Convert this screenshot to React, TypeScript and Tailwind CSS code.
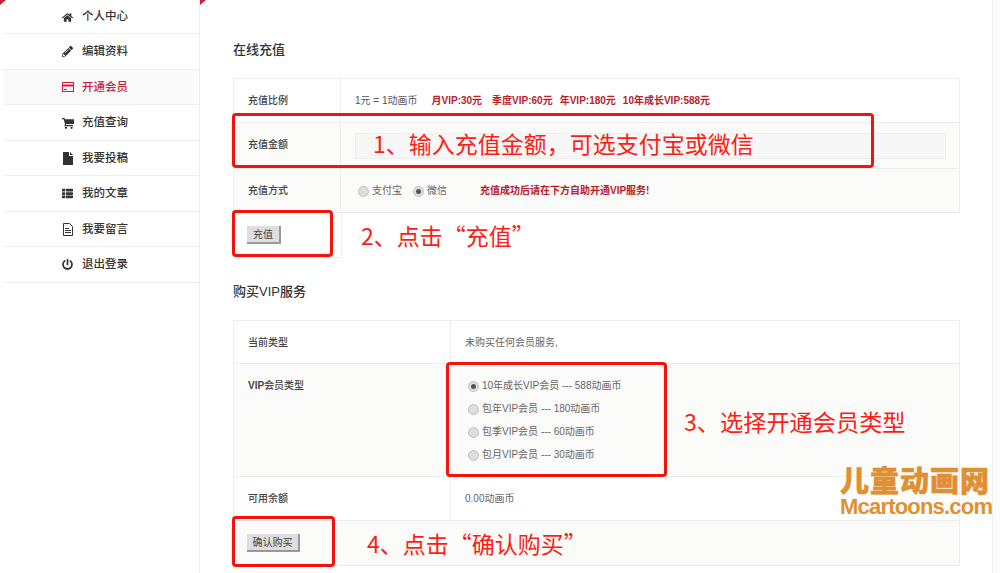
import type { ReactNode } from "react";
import { FaHome, FaPencilAlt, FaPowerOff, FaThList } from "react-icons/fa";

const cjk = "font-['Liberation_Sans','Noto_Sans_CJK_SC',sans-serif]";

const CardIcon = () => (
  <svg width="12" height="12" viewBox="0 0 12 12" fill="none" stroke="currentColor">
    <rect x="0.5" y="1.5" width="11" height="9" />
    <path d="M1 4.5h10" strokeWidth="2" />
    <path d="M2 8.5h3" />
  </svg>
);

const CartIcon = () => (
  <svg width="12" height="12" viewBox="0 0 12 12" fill="currentColor">
    <path d="M0 1h2.6l.4 1.2H12V7H4.2l-.2 1H11v1.2H2.4L3 7 1.7 2.2H0z" />
    <circle cx="4" cy="10.8" r="1.1" />
    <circle cx="9.6" cy="10.8" r="1.1" />
  </svg>
);

const FileIcon = () => (
  <svg width="12" height="13" viewBox="0 0 12 13" fill="currentColor">
    <path d="M1 0h6v4h4v9H1z" />
    <path d="M8 0l3 3H8z" />
  </svg>
);

const DocIcon = () => (
  <svg width="12" height="13" viewBox="0 0 12 13" fill="none" stroke="currentColor">
    <path d="M1.5 .5h6l3 3v9h-9z" />
    <path d="M3 5.5h4M3 7.5h6M3 9.5h6" />
  </svg>
);

const menu = [
  { label: "个人中心", icon: <FaHome /> },
  { label: "编辑资料", icon: <FaPencilAlt /> },
  { label: "开通会员", icon: <CardIcon />, active: true },
  { label: "充值查询", icon: <CartIcon /> },
  { label: "我要投稿", icon: <FileIcon /> },
  { label: "我的文章", icon: <FaThList /> },
  { label: "我要留言", icon: <DocIcon /> },
  { label: "退出登录", icon: <FaPowerOff /> },
];

const Radio = ({ checked }: { checked?: boolean }) => (
  <span className="mt-[1px] flex h-[11px] w-[11px] shrink-0 items-center justify-center rounded-full border border-[#c2c2c2] bg-[#dedede]">
    {checked && <span className="h-[5px] w-[5px] rounded-full bg-[#555]" />}
  </span>
);

const Row = ({
  label,
  width,
  height,
  children,
  shaded,
  top,
}: {
  label: ReactNode;
  width: string;
  height: string;
  children?: ReactNode;
  shaded?: boolean;
  top?: boolean;
}) => (
  <div className={`flex border-b border-[#eeeeee] ${height} ${shaded ? "bg-[#fbfbfa]" : "bg-white"}`}>
    <div
      className={`flex shrink-0 border-r border-[#eeeeee] pl-[14px] text-[10px] font-medium text-[#444] ${width} ${
        top ? "items-start pt-[14px]" : "items-center"
      }`}
    >
      {label}
    </div>
    <div className="flex min-w-0 flex-1 items-center pl-[14px] text-[10px] text-[#666]">{children}</div>
  </div>
);

const Note = ({ className, children }: { className: string; children: ReactNode }) => (
  <div className={`absolute font-['Noto_Sans_CJK_SC',sans-serif] leading-none whitespace-nowrap text-[#ff1c14] ${className}`}>
    {children}
  </div>
);

const Frame = ({ className }: { className: string }) => (
  <div className={`absolute rounded-[4px] border-[3px] border-[#f5120c] ${className}`} />
);

function MenuRow({ label, icon, active }: { label: string; icon: ReactNode; active?: boolean }) {
  return (
    <div
      className={`flex h-full items-center pt-[1px] pl-[59px] text-[11.5px] font-medium ${
        active ? "bg-[#fafafa] text-[#c8203a]" : "text-[#333]"
      }`}
    >
      <span className="flex w-[20px] justify-start text-[11px]">{icon}</span>
      {label}
    </div>
  );
}

export default function App() {
  return (
    <div className={`relative flex h-[573px] w-[1000px] overflow-hidden bg-white ${cjk}`}>
      {/* sidebar */}
      <aside className="ml-[3px] w-[197px] shrink-0 border-r border-[#eeeeee]">
        <div className="h-[34px] border-b border-[#eeeeee]">
          <MenuRow {...menu[0]} />
        </div>
        {menu.slice(1).map((item) => (
          <div key={item.label} className="h-[35.5px] border-b border-[#eeeeee]">
            <MenuRow {...item} />
          </div>
        ))}
      </aside>

      {/* main */}
      <main className="flex-1 pt-[40px] pl-[33px]">
        <h2 className="h-[19px] text-[13px] leading-[19px] font-medium text-[#333]">在线充值</h2>
        <div className="mt-[19px] w-[727px] border-t border-l border-[#eeeeee]">
          <div className="border-r border-[#eeeeee]">
            <Row label="充值比例" width="w-[107px]" height="h-[44px]">
              <span className="text-[#555]">1元 = 1动画币</span>
              <span className="ml-[14px] font-bold text-[#b8202c]">月VIP:30元</span>
              <span className="ml-[10px] font-bold text-[#b8202c]">季度VIP:60元</span>
              <span className="ml-[7px] font-bold text-[#b8202c]">年VIP:180元</span>
              <span className="ml-[7px] font-bold text-[#b8202c]">10年成长VIP:588元</span>
            </Row>
            <Row label={<span className="-mt-[3px]">充值金额</span>} width="w-[107px]" height="h-[46px]" shaded>
              <div className="h-[26px] w-[591px] border border-[#eeeeee] bg-[#f7f7f7]" />
            </Row>
            <Row label="充值方式" width="w-[107px]" height="h-[44px]" shaded>
              <span className="ml-[3px]"><Radio /></span>
              <span className="ml-[3px]">支付宝</span>
              <span className="ml-[11px]"><Radio checked /></span>
              <span className="ml-[3px]">微信</span>
              <span className="ml-[33px] font-bold text-[#b8202c]">充值成功后请在下方自助开通VIP服务!</span>
            </Row>
          </div>
          <div className="flex h-[45px] w-[108px] items-center border-r border-b border-[#eeeeee] pl-[13px]">
            <button className="h-[18px] w-[34px] border-r-2 border-b-2 border-[#999] bg-[#dedede] text-[10px] text-[#444]">
              充值
            </button>
          </div>
        </div>

        <h2 className="mt-[24px] h-[19px] text-[13px] leading-[19px] font-medium text-[#333]">购买VIP服务</h2>
        <div className="mt-[19px] w-[727px] border-t border-r border-l border-[#eeeeee]">
          <Row label="当前类型" width="w-[217px]" height="h-[43px]">
            未购买任何会员服务,
          </Row>
          <Row
            label={
              <span>
                <span className="font-bold">VIP</span>会员类型
              </span>
            }
            width="w-[217px]"
            height="h-[113px]"
            shaded
            top
          >
            <div className="ml-[3px] flex flex-col gap-[9px]">
              {[
                { text: "10年成长VIP会员 --- 588动画币", checked: true },
                { text: "包年VIP会员 --- 180动画币" },
                { text: "包季VIP会员 --- 60动画币" },
                { text: "包月VIP会员 --- 30动画币" },
              ].map((o) => (
                <div key={o.text} className="flex h-[14px] items-center gap-[3px]">
                  <Radio checked={o.checked} />
                  <span>{o.text}</span>
                </div>
              ))}
            </div>
          </Row>
          <Row label="可用余额" width="w-[217px]" height="h-[44px]">
            0.00动画币
          </Row>
          <div className="flex h-[45px] items-center border-b border-[#eeeeee] bg-[#fbfbfa] pl-[13px]">
            <button className="h-[18px] w-[53px] border-r-2 border-b-2 border-[#999] bg-[#dedede] text-[10px] text-[#444]">
              确认购买
            </button>
          </div>
        </div>
      </main>

      {/* page edge */}
      <div className="w-[8px] shrink-0 border-l border-[#f2f2f2] bg-[#fbfbfb]" />

      {/* corner marks */}
      <div className="absolute top-0 left-0 h-0 w-0 border-t-[5px] border-r-[6px] border-t-[#c8203a] border-r-transparent" />
      <div className="absolute top-0 left-[200px] h-0 w-0 border-t-[5px] border-r-[6px] border-t-[#c8203a] border-r-transparent" />

      {/* annotations */}
      <Frame className="top-[113px] left-[232px] h-[55px] w-[642px]" />
      <Note className="top-[132px] left-[373px] text-[23px]">{"1、输入充值金额\uFF0C可选支付宝或微信"}</Note>
      <Frame className="top-[210px] left-[232px] h-[47px] w-[101px]" />
      <Note className="top-[224px] left-[361px] text-[23px]">2、点击“充值”</Note>
      <Frame className="top-[362px] left-[446px] h-[115px] w-[221px]" />
      <Note className="top-[410px] left-[684px] text-[23.2px]">3、选择开通会员类型</Note>
      <Frame className="top-[516px] left-[232px] h-[51px] w-[103px]" />
      <Note className="top-[532px] left-[367px] text-[23px]">4、点击“确认购买”</Note>

      {/* watermark */}
      <div className="absolute top-[469px] left-[840px] text-[29px] leading-[27px] font-black tracking-[1px] whitespace-nowrap text-[#e09033] [-webkit-text-stroke:0.6px_#e09033]">
        儿童动画网
      </div>
      <div className="absolute top-[497px] left-[840px] font-['Liberation_Sans',sans-serif] text-[22px] leading-[20px] font-bold tracking-[-0.8px] whitespace-nowrap text-[#e09033]">
        Mcartoons.com
      </div>
    </div>
  );
}
